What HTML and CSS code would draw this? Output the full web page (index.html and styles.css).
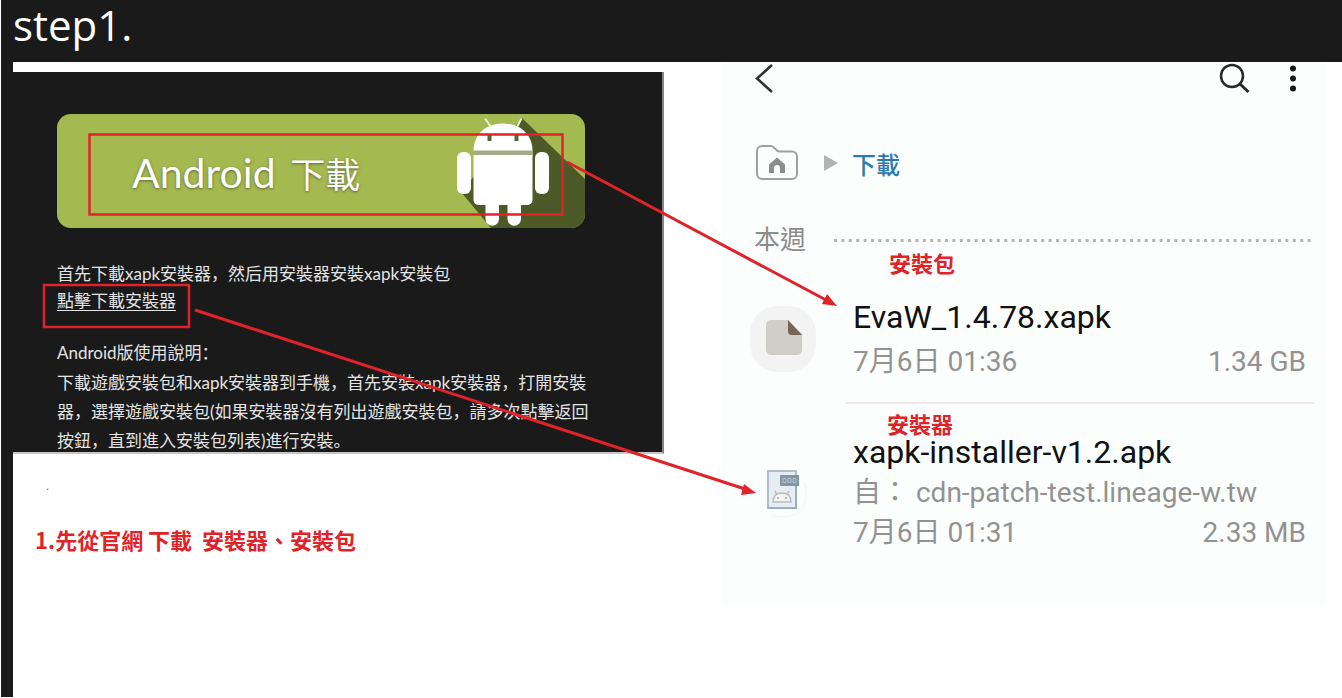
FILE: index.html
```html
<!DOCTYPE html>
<html lang="zh-Hant">
<head>
<meta charset="utf-8">
<title>step1.</title>
<link rel="stylesheet" href="styles.css">
</head>
<body>
<h1 class="step-title">step1.</h1>
<main class="board">
  <section class="guide">
    <div class="download-card" lang="zh-Hans">
      <button class="download-button" type="button">
        <span class="download-label">Android <span class="download-cjk">下載</span></span>
        <svg class="robot" viewBox="450 114 135 114" aria-hidden="true">
          <path d="M522 118L585 179V228H491L461 192Z" fill="#4d5a28"/>
          <path d="M473 150h60v6h-60z" fill="#a5ab87"/>
          <g fill="#fff">
            <path d="M473.500 150.500C474 133 487 123.500 503 123.500S532 133 532.500 150.500Z"/>
            <path d="M473.500 155H532.500V200a5 5 0 0 1-5 5H478.500a5 5 0 0 1-5-5Z"/>
            <rect x="457" y="152" width="14" height="42" rx="6"/>
            <rect x="535" y="152" width="14" height="42" rx="6"/>
            <path d="M485.500 200H499V219a6.750 6.750 0 0 1-13.500 0ZM507.500 200H521V219a6.750 6.750 0 0 1-13.500 0Z"/>
          </g>
          <path d="M485 118.500L491 127M521.500 118.500L517 127" stroke="#eceee0" stroke-width="2"/>
          <path d="M489.500 134V141M516.500 134V141" stroke="#59652f" stroke-width="4"/>
        </svg>
      </button>
      <p class="intro">首先下載xapk安裝器，然后用安裝器安裝xapk安裝包<br><a class="installer-link" href="#installer">點擊下載安裝器</a></p>
      <h2 class="usage-title">Android版使用說明：</h2>
      <p class="usage">下載遊戲安裝包和xapk安裝器到手機，首先安裝xapk安裝器，打開安裝<br>器，選擇遊戲安裝包(如果安裝器沒有列出遊戲安裝包，請多次點擊返回<br>按鈕，直到進入安裝包列表)進行安裝。</p>
    </div>
    <p class="stray-dot">.</p>
    <p class="caption">1.先從官網 下載&nbsp; 安裝器、安裝包</p>
  </section>

  <section class="phone">
    <div class="topbar">
      <button class="icon-button" type="button" aria-label="返回">
        <svg width="20" height="32" viewBox="0 0 20 32"><path d="M18 3L3 16.500L18 30" fill="none" stroke="#303030" stroke-width="2.500"/></svg>
      </button>
      <span class="actions">
        <button class="icon-button" type="button" aria-label="搜尋">
          <svg width="32" height="32" viewBox="0 0 32 32"><circle cx="13" cy="14" r="11" fill="none" stroke="#282828" stroke-width="2.500"/><path d="M21 22L29.500 30" stroke="#282828" stroke-width="3"/></svg>
        </button>
        <button class="icon-button" type="button" aria-label="更多">
          <svg width="8" height="32" viewBox="0 0 8 32"><g fill="#181818"><circle cx="4" cy="6.500" r="3"/><circle cx="4" cy="16.500" r="3"/><circle cx="4" cy="26.500" r="3"/></g></svg>
        </button>
      </span>
    </div>

    <nav class="breadcrumb">
      <svg width="42" height="36" viewBox="0 0 42 36" aria-hidden="true">
        <path d="M1 6a5 5 0 0 1 5-5H15C18 1 20 6 23 6.500H36a5 5 0 0 1 5 5V29a5 5 0 0 1-5 5H6a5 5 0 0 1-5-5Z" fill="none" stroke="#a0a0a0" stroke-width="2"/>
        <path d="M13 28V19.500L21 12.500L29 19.500V28H24V23a3 3 0 0 0-6 0V28Z" fill="#8c8c8c"/>
      </svg>
      <svg width="14" height="18" viewBox="0 0 14 18" aria-hidden="true"><path d="M0 1L14 9L0 17Z" fill="#b2b2b2"/></svg>
      <a class="crumb" href="#downloads">下載</a>
    </nav>

    <div class="week">
      <h2 class="week-title">本週</h2>
      <svg class="dots" height="3" aria-hidden="true"><line x1="0" y1="1.500" x2="100%" y2="1.500" stroke="#b4b4b4" stroke-width="3" stroke-dasharray="3 4.400"/></svg>
    </div>

    <article class="file">
      <svg class="file-icon" width="66" height="66" viewBox="0 0 66 66" aria-hidden="true">
        <rect width="66" height="66" rx="27" fill="#f4f3f3"/>
        <path d="M21 14H38L52 28V44a5 5 0 0 1-5 5H21a5 5 0 0 1-5-5V19a5 5 0 0 1 5-5Z" fill="#d0cec6"/>
        <path d="M38 14L52 29H42a4 4 0 0 1-4-4Z" fill="#756354"/>
      </svg>
      <div class="file-body">
        <span class="tag">安裝包</span>
        <h3 class="file-name">EvaW_1.4.78.xapk</h3>
        <p class="meta"><span>7月6日 01:36</span><span>1.34 GB</span></p>
      </div>
    </article>
    <hr class="divider">
    <article class="file" id="installer">
      <svg class="file-icon" width="66" height="66" viewBox="0 0 66 66" aria-hidden="true">
        <path d="M54 23C60 39 54 51 44 56Q33 60 23 56" fill="none" stroke="#f7f5f5"/>
        <rect x="18" y="12" width="28" height="37" fill="#e7edf5" stroke="#b1bdc9" stroke-width="2"/>
        <path d="M46 26V49H18" fill="none" stroke="#9aaec0" stroke-width="2"/>
        <rect x="30" y="16" width="19" height="11" fill="#8495a8"/>
        <path d="M33 19.500h3v4h-3zM38 19.500h3v4h-3zM43 19.500h3v4h-3z" fill="none" stroke="#b5c1cd"/>
        <path d="M23 43C23 37 26 34 32 34S41 37 41 43Z" fill="#f4f3ef" stroke="#b8bdc1" stroke-width="1.500"/>
        <path d="M25 32L27 36M39 32L37 36" stroke="#b8bdc1" stroke-width="1.500"/>
        <path d="M27 38h2v2h-2zM35 38h2v2h-2z" fill="#b8bdc1"/>
      </svg>
      <div class="file-body">
        <span class="tag">安裝器</span>
        <h3 class="file-name">xapk-installer-v1.2.apk</h3>
        <p class="meta">自： cdn-patch-test.lineage-w.tw</p>
        <p class="meta"><span>7月6日 01:31</span><span>2.33 MB</span></p>
      </div>
    </article>
  </section>

  <svg class="annotations" viewBox="13 62 1329 635" preserveAspectRatio="none" aria-hidden="true">
    <g fill="none" stroke="#df2328" stroke-width="2.500">
      <rect x="89.500" y="134.500" width="473" height="80"/>
      <rect x="44" y="285" width="145" height="42"/>
      <path d="M567 162L826 300M195 310L745 489" stroke-width="3"/>
    </g>
    <path d="M837 306L822 304L827 294ZM756 493L741 495L744 484Z" fill="#df2328"/>
  </svg>
</main>
</body>
</html>
```
FILE: styles.css
```css
* {
  box-sizing: border-box;
}

body {
  margin: 0;
  min-height: 100vh;
  display: flex;
  flex-direction: column;
  background: #1a1a1a;
  border-left: 1px solid #fff;
  border-bottom: 1px solid #fff;
  font-family: "Open Sans", "Noto Sans CJK TC", sans-serif;
}

h1, h2, h3, p {
  margin: 0;
  font-weight: 400;
}

button {
  border: 0;
  padding: 0;
  background: none;
  font: inherit;
  color: inherit;
}

svg {
  display: block;
}

.step-title {
  padding: 0 12px 12px;
  color: #fff;
  font-size: 42px;
  font-weight: 500;
  line-height: 50px;
}

.board {
  position: relative;
  flex: 1;
  margin-left: 12px;
  padding-right: 16px;
  display: grid;
  grid-template-columns: 651fr 604fr;
  column-gap: 58px;
  align-items: start;
  background: #fff;
}

.guide {
  padding-top: 10px;
}

.download-card {
  height: 382px;
  padding: 42px 42px 0 44px;
  background: #1a1a1a;
  border-right: 2px solid #858585;
  border-bottom: 2px solid #c6c6c6;
  color: #e4e4e4;
  font-family: Lato, "Noto Sans CJK SC", sans-serif;
  font-size: 17px;
  white-space: nowrap;
}

.download-button {
  width: 100%;
  max-width: 528px;
  height: 114px;
  padding-left: 75px;
  display: flex;
  align-items: center;
  justify-content: space-between;
  overflow: hidden;
  border-radius: 14px;
  background: #a5b951;
  color: #fff;
}

.download-label {
  padding-top: 4px;
  font-family: Lato, "Noto Sans CJK TC", sans-serif;
  font-size: 41px;
  line-height: 48px;
  text-shadow: 0 1px 3px #59652f;
}

.download-cjk {
  margin-left: 4px;
  font-size: 35px;
}

.robot {
  width: 135px;
  height: 114px;
}

.intro {
  margin-top: 32px;
  line-height: 27px;
}

.installer-link {
  color: inherit;
  text-underline-offset: 3px;
}

.usage-title {
  margin-top: 24px;
  font-size: 17px;
  line-height: 30px;
}

.usage {
  line-height: 29px;
}

.stray-dot {
  padding: 24px 0 0 33px;
  color: #777;
  font-size: 12px;
  line-height: 16px;
}

.caption {
  padding: 27px 0 0 22px;
  color: #df2328;
  font-family: "Noto Sans CJK TC", sans-serif;
  font-size: 22px;
  font-weight: 700;
  line-height: 36px;
}

.phone {
  padding: 0 12px 51px 28px;
  background: #fcfefd;
  color: #111;
  font-family: Roboto, "Noto Sans CJK TC", sans-serif;
}

.topbar {
  padding: 0 17px 0 4px;
  display: flex;
  justify-content: space-between;
}

.actions {
  display: flex;
  gap: 38px;
}

.breadcrumb {
  margin-top: 50px;
  padding-left: 6px;
  display: flex;
  align-items: center;
  gap: 26px;
}

.crumb {
  margin-left: -12px;
  padding-top: 6px;
  color: #2d7ab0;
  font-size: 24px;
  font-weight: 500;
  line-height: 32px;
  text-decoration: none;
}

.week {
  margin-top: 40px;
  padding-left: 4px;
  display: flex;
  align-items: center;
  gap: 28px;
}

.week-title {
  color: #8c8c8c;
  font-size: 26px;
  line-height: 36px;
}

.dots {
  flex: 1;
  min-width: 0;
}

.file {
  padding-right: 8px;
  display: flex;
  align-items: center;
  gap: 37px;
}

.week + .file {
  margin-top: 38px;
}

.file-icon {
  flex: none;
}

.file-body {
  position: relative;
  flex: 1;
  white-space: nowrap;
}

.file-name {
  font-size: 32px;
  line-height: 42px;
}

.meta {
  display: flex;
  justify-content: space-between;
  color: #929292;
  font-size: 28px;
  line-height: 40px;
  white-space: pre;
}

.file-name + .meta:last-child {
  padding-top: 4px;
}

.divider {
  height: 2px;
  margin: 20px 0 27px 95px;
  border: 0;
  background: #f0e8e9;
}

.tag {
  position: absolute;
  top: -42px;
  left: 36px;
  color: #df2328;
  font-size: 22px;
  font-weight: 700;
  line-height: 22px;
}

.divider + .file .tag {
  top: -16px;
  left: 34px;
}

.annotations {
  position: absolute;
  inset: 0;
  width: 100%;
  height: 100%;
  pointer-events: none;
}
```
